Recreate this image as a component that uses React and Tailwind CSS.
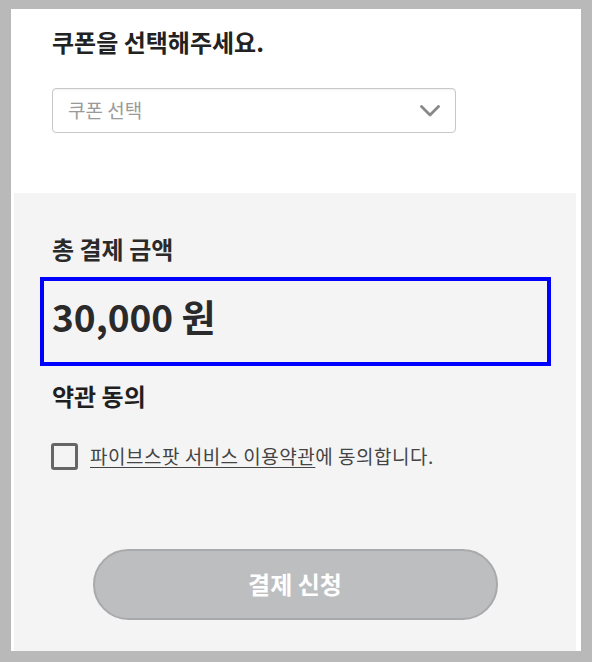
import { useState } from 'react';

const font = { fontFamily: '"Noto Sans CJK KR", "Noto Sans", sans-serif' };

const ChevronDown = () => (
  <svg width="20" height="12" viewBox="0 0 20 12" fill="none">
    <path d="M1.5 1.5 L10 10 L18.5 1.5" stroke="#888" strokeWidth="2.8" strokeLinecap="round" strokeLinejoin="round" />
  </svg>
);

const App = () => {
  const [agree, setAgree] = useState(false);

  return (
    <div className="w-[592px] h-[662px] bg-[#b9b9b9] pt-[9px] pl-[11px] pr-[11px] pb-[11px]" style={font}>
      <div className="h-full bg-white flex flex-col">
        {/* Coupon */}
        <div className="pl-[41px] pt-[16px] pb-[60px]">
          <h2 className="text-[24px] leading-[34px] font-bold text-[#222]">쿠폰을 선택해주세요.</h2>
          <button className="mt-[29px] w-[404px] h-[45px] flex items-center justify-between pl-[15px] pr-[15px] border border-[#c8c8c8] rounded-[4px] shadow-[inset_0_1px_2px_rgba(0,0,0,0.06)] bg-white">
            <span className="text-[19px] text-[#9a9a9a]">쿠폰 선택</span>
            <ChevronDown />
          </button>
        </div>

        {/* Payment */}
        <div className="flex-1 bg-[#f4f4f4] ml-[3px] mr-[5px] pl-[38px] pt-[39px]">
          <h3 className="text-[24px] leading-[34px] font-bold text-[#2a2a2a]">총 결제 금액</h3>
          <div className="mt-[11px] -ml-[12px] w-[511px] h-[89px] border-4 border-[#0000ff] flex items-center pl-[8px] pb-[10px]">
            <span className="text-[37px] font-bold text-[#2a2a2a] leading-none">30,000 원</span>
          </div>

          <h3 className="mt-[13px] text-[24px] leading-[34px] font-bold text-[#1f1f1f]">약관 동의</h3>
          <label className="mt-[29px] flex items-center gap-[12px] cursor-pointer">
            <span
              onClick={() => setAgree(!agree)}
              className="w-[27px] h-[27px] -ml-[1px] border-[3px] border-[#666] rounded-[3px] bg-[#f4f4f4]"
            />
            <span className="text-[19px] tracking-[0.5px] text-[#444]">
              <span className="underline underline-offset-[3px]">파이브스팟 서비스 이용약관</span>에 동의합니다.
            </span>
          </label>

          <div className="-ml-[38px] pt-[78px] flex justify-center">
            <button className="w-[405px] h-[71px] rounded-full bg-[#bdbec0] border-2 border-[#a8a9ab] text-white text-[24px] font-bold">
              결제 신청
            </button>
          </div>
        </div>
      </div>
    </div>
  );
};

export default App;
